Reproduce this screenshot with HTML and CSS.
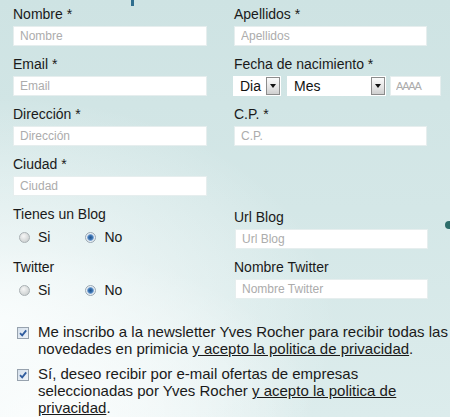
FILE: index.html
```html
<!DOCTYPE html>
<html lang="es">
<head>
<meta charset="utf-8">
<title>Registro</title>
<link rel="stylesheet" href="styles.css">
</head>
<body>
<div class="page">
  <span class="deco-line"></span>
  <span class="deco-dot"></span>
  <form class="form">
    <div class="grid">
      <div class="field">
        <label class="lbl">Nombre *</label>
        <input class="txt" type="text" placeholder="Nombre">
      </div>
      <div class="field">
        <label class="lbl">Apellidos *</label>
        <input class="txt txt-r" type="text" placeholder="Apellidos">
      </div>

      <div class="field">
        <label class="lbl">Email *</label>
        <input class="txt" type="text" placeholder="Email">
      </div>
      <div class="field">
        <label class="lbl">Fecha de nacimiento *</label>
        <div class="date">
          <div class="select select-day"><span>Dia</span><span class="arrow"><span class="tri"></span></span></div>
          <div class="select select-month"><span>Mes</span><span class="arrow"><span class="tri"></span></span></div>
          <input class="txt year" type="text" placeholder="AAAA">
        </div>
      </div>

      <div class="field">
        <label class="lbl">Dirección *</label>
        <input class="txt" type="text" placeholder="Dirección">
      </div>
      <div class="field">
        <label class="lbl">C.P. *</label>
        <input class="txt txt-r" type="text" placeholder="C.P.">
      </div>

      <div class="field">
        <label class="lbl">Ciudad *</label>
        <input class="txt" type="text" placeholder="Ciudad">
      </div>
      <div></div>

      <div class="field">
        <label class="lbl lbl-radio">Tienes un Blog</label>
        <div class="radios">
          <span class="opt"><span class="radio"></span>Si</span>
          <span class="opt opt-2"><span class="radio radio-on"></span>No</span>
        </div>
      </div>
      <div class="field field-down">
        <label class="lbl">Url Blog</label>
        <input class="txt txt-r txt-url" type="text" placeholder="Url Blog">
      </div>

      <div class="field">
        <label class="lbl lbl-radio">Twitter</label>
        <div class="radios">
          <span class="opt"><span class="radio"></span>Si</span>
          <span class="opt opt-2"><span class="radio radio-on"></span>No</span>
        </div>
      </div>
      <div class="field">
        <label class="lbl">Nombre Twitter</label>
        <input class="txt txt-r txt-url" type="text" placeholder="Nombre Twitter">
      </div>
    </div>

    <div class="consents">
      <div class="consent">
        <span class="check"><svg width="10" height="10" viewBox="0 0 10 10"><path d="M2 5.2 L4.2 7.4 L8.2 2.4" fill="none" stroke="#2f5c9e" stroke-width="1.8"/></svg></span>
        <p class="ctext">Me inscribo a la newsletter Yves Rocher para recibir todas las novedades en primicia <a class="lnk" href="#">y acepto la politica de privacidad</a>.</p>
      </div>
      <div class="consent consent-2">
        <span class="check"><svg width="10" height="10" viewBox="0 0 10 10"><path d="M2 5.2 L4.2 7.4 L8.2 2.4" fill="none" stroke="#2f5c9e" stroke-width="1.8"/></svg></span>
        <p class="ctext">Sí, deseo recibir por e-mail ofertas de empresas seleccionadas por Yves Rocher <a class="lnk" href="#">y acepto la politica de privacidad</a>.</p>
      </div>
    </div>
  </form>
</div>
</body>
</html>
```
FILE: styles.css
```css
html, body {
  margin: 0;
  padding: 0;
}

body {
  font-family: "Liberation Sans", Arial, sans-serif;
  color: #1a1a1a;
}

.page {
  position: relative;
  width: 450px;
  height: 417px;
  overflow: hidden;
  background:
    radial-gradient(ellipse 75% 55% at 0% 78%, rgba(250, 253, 253, 0.95) 0%, rgba(250, 253, 253, 0) 100%),
    radial-gradient(ellipse 60% 40% at 10% 100%, rgba(255, 255, 255, 0.9) 0%, rgba(255, 255, 255, 0) 100%),
    linear-gradient(180deg, #cee3e3 0%, #d4e7e7 50%, #dcecec 100%);
}

.deco-line {
  position: absolute;
  left: 131px;
  top: 0;
  width: 2.5px;
  height: 6px;
  background: #2f6e8e;
}

.deco-dot {
  position: absolute;
  left: 445px;
  top: 221px;
  width: 8px;
  height: 8px;
  border-radius: 50%;
  background: #2d6d6a;
}

.form {
  margin: 0;
}

.grid {
  display: grid;
  grid-template-columns: 194px 194px;
  column-gap: 27px;
  row-gap: 10px;
  padding: 6px 0 0 13px;
  align-items: start;
}

.field {
  display: flex;
  flex-direction: column;
  align-items: flex-start;
}

.field-down {
  padding-top: 3px;
}

.lbl {
  display: block;
  font-size: 14px;
  line-height: 16px;
  margin-bottom: 4px;
  color: #1a1a1a;
  white-space: nowrap;
}

.lbl-radio {
  margin-bottom: 5px;
}

.txt {
  box-sizing: border-box;
  width: 194px;
  height: 20px;
  margin: 0;
  padding: 0 6px;
  border: 1px solid #e6eeee;
  background: #ffffff;
  font-family: "Liberation Sans", Arial, sans-serif;
  font-size: 12px;
  color: #333;
  outline: none;
}

.txt::placeholder {
  color: #acacac;
}

.txt-r {
  width: 193px;
}

.txt-url {
  margin-left: 1px;
}

.date {
  display: flex;
  align-items: center;
  margin-left: -1px;
}

.select {
  box-sizing: border-box;
  display: flex;
  align-items: center;
  height: 20px;
  padding-left: 7px;
  background: #ffffff;
  font-size: 14px;
  color: #111;
}

.select-day {
  width: 48px;
}

.select-month {
  width: 99px;
  margin-left: 6px;
}

.arrow {
  box-sizing: border-box;
  margin-left: auto;
  margin-right: 1px;
  width: 14px;
  height: 18px;
  border: 1px solid #8c8c8c;
  background: linear-gradient(180deg, #fbfbfb 0%, #e4e4e4 60%, #cfcfcf 100%);
  display: flex;
  align-items: center;
  justify-content: center;
}

.tri {
  width: 0;
  height: 0;
  border-left: 3.5px solid transparent;
  border-right: 3.5px solid transparent;
  border-top: 4px solid #111;
}

.year {
  width: 51px;
  margin-left: 4px;
  padding: 0 5px;
  font-size: 11px;
  letter-spacing: -1.2px;
}

.radios {
  display: flex;
  align-items: center;
  height: 20px;
  padding-left: 6px;
  font-size: 14px;
  line-height: 16px;
  color: #1a1a1a;
}

.opt {
  display: flex;
  align-items: center;
  gap: 8px;
}

.opt-2 {
  margin-left: 35px;
}

.radio {
  box-sizing: border-box;
  width: 11px;
  height: 11px;
  border-radius: 50%;
  border: 1px solid #a9b0b3;
  background: radial-gradient(circle at 40% 35%, #f6f6f6 0%, #d9dcdc 55%, #c2c7c7 100%);
}

.radio-on {
  border-color: #9aa8b4;
  background: radial-gradient(circle at 50% 50%, #24548c 0px, #3a73b2 2px, #7fa7d3 3px, #eef3f7 3.8px, #d0d8df 100%);
}

.consents {
  margin-top: 23px;
}

.consent {
  display: flex;
  align-items: flex-start;
  padding-left: 17px;
}

.consent-2 {
  margin-top: 8px;
}

.check {
  box-sizing: border-box;
  flex: 0 0 auto;
  width: 12px;
  height: 12px;
  margin-top: 4px;
  margin-right: 9px;
  border: 1px solid #97a2ae;
  background: linear-gradient(135deg, #d5e0ec 0%, #eef3f8 100%);
  display: flex;
  align-items: center;
  justify-content: center;
}

.ctext {
  margin: 0;
  width: 412px;
  font-size: 15px;
  line-height: 17px;
  color: #1a1a1a;
}

.lnk {
  color: #1a1a1a;
  text-decoration: underline;
}
```
